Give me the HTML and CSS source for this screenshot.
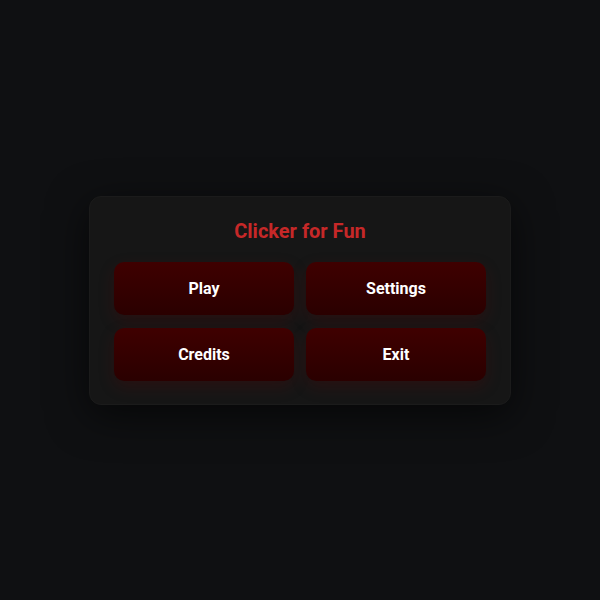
FILE: index.html
```html
<!DOCTYPE html>
<html>
<head>
<meta charset="utf-8">
<link rel="stylesheet" href="styles.css">
</head>
<body>
<div class="card">
  <h1 class="title">Clicker for Fun</h1>
  <div class="grid">
    <button class="btn">Play</button>
    <button class="btn">Settings</button>
    <button class="btn">Credits</button>
    <button class="btn">Exit</button>
  </div>
</div>
</body>
</html>
```

FILE: styles.css
```css
html, body {
  margin: 0;
  height: 100%;
}
body {
  background: #0f1012;
  display: flex;
  align-items: center;
  justify-content: center;
  font-family: Roboto, "Liberation Sans", sans-serif;
}
.card {
  width: 372px;
  padding: 21px 24px 23px;
  background: #161616;
  border: 1px solid #1b1b1b;
  border-radius: 12px;
  box-shadow: 0 10px 40px rgba(0,0,0,0.6);
}
.title {
  margin: 0 0 18px;
  text-align: center;
  color: #c62828;
  font-size: 20px;
  font-weight: 700;
  line-height: 26px;
}
.grid {
  display: grid;
  grid-template-columns: 1fr 1fr;
  gap: 13px 12px;
}
.btn {
  height: 53px;
  border: none;
  border-radius: 10px;
  background: linear-gradient(#3f0000, #2a0000);
  box-shadow: 0 6px 16px rgba(110,0,0,0.22);
  color: #fff;
  font-family: Roboto, "Liberation Sans", sans-serif;
  font-size: 16px;
  font-weight: 700;
}
```
